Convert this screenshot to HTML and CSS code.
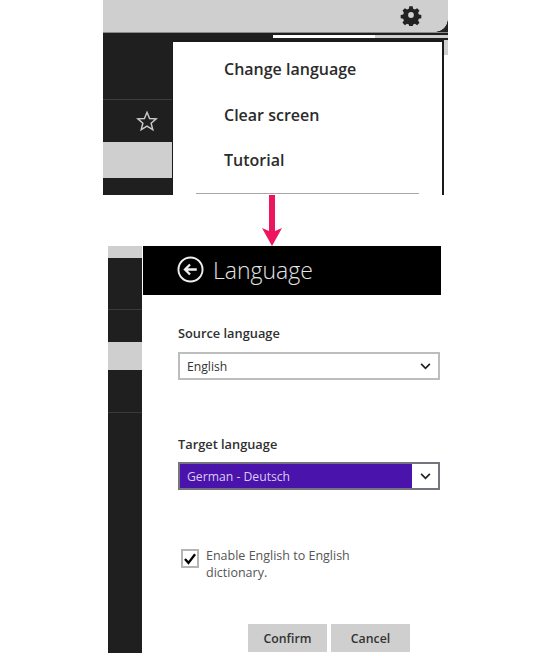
FILE: index.html
```html
<!DOCTYPE html>
<html lang="en">
<head>
<meta charset="utf-8">
<title>Language settings</title>
<link rel="stylesheet" href="styles.css">
</head>
<body>
<section class="top">
  <div class="topbar">
    <svg class="gear" viewBox="0 0 24 24" width="22" height="22"><path fill="#222" fill-rule="evenodd" d="M10 1.500h4l.6 3 2.200.9 2.600-1.700 2.900 2.900-1.700 2.600.9 2.200 3 .6v4l-3 .6-.9 2.200 1.700 2.600-2.900 2.900-2.600-1.700-2.200.9-.6 3h-4l-.6-3-2.200-.9-2.600 1.700-2.900-2.900 1.700-2.600-.9-2.200-3-.6v-4l3-.6.9-2.200-1.700-2.600 2.900-2.900 2.600 1.700 2.200-.9zM12 8.500a3.500 3.500 0 1 0 0 7 3.500 3.500 0 0 0 0-7z" transform="translate(1.200 1.200) scale(.9)"/></svg>
    <span class="corner"></span>
  </div>
  <div class="topbody">
    <div class="topstrip">
      <div class="row r1"></div>
      <div class="row r2">
        <svg class="star" viewBox="0 0 24 24" width="22" height="22"><path fill="none" stroke="#c9c9c9" stroke-width="1.600" d="M12 2.500l2.800 6.700 7.200.5-5.500 4.700 1.800 7-6.300-3.800-6.300 3.800 1.800-7L2 9.700l7.200-.5z"/></svg>
      </div>
      <div class="row r3"></div>
      <div class="row r4"></div>
    </div>
    <div class="menuwrap">
      <div class="lights"><span class="light-white"></span><span class="light-gray"></span></div>
      <div class="menurow">
        <nav class="menu">
          <a class="item">Change language</a>
          <a class="item">Clear screen</a>
          <a class="item">Tutorial</a>
          <div class="rule"></div>
        </nav>
        <div class="gutter"><span class="gutter-gray"></span></div>
      </div>
    </div>
  </div>
</section>
<div class="arrow">
  <svg viewBox="0 0 20 51" width="20" height="51"><path fill="#ee1560" d="M7 0h6v36l7-3-10 18L0 33l7 3z"/></svg>
</div>
<section class="panel">
  <div class="side">
    <div class="s s1"></div>
    <div class="s s2"></div>
    <div class="s s3"></div>
    <div class="s s4"></div>
    <div class="s s5"></div>
    <div class="s s6"></div>
  </div>
  <div class="main">
    <header class="head">
      <svg viewBox="0 0 28 28" width="27" height="27"><circle cx="14" cy="14" r="12.500" fill="none" stroke="#eee" stroke-width="2"/><path fill="none" stroke="#eee" stroke-width="2.400" d="M20.500 14H8.500M13.500 8.800L8.300 14l5.200 5.200"/></svg>
      <h1>Language</h1>
    </header>
    <div class="form">
      <label class="lab first">Source language</label>
      <div class="select">
        <span class="val">English</span>
        <span class="chev"><svg viewBox="0 0 12 8" width="11" height="7"><path fill="none" stroke="#222" stroke-width="2" d="M1 1l5 5 5-5"/></svg></span>
      </div>
      <label class="lab second">Target language</label>
      <div class="select on">
        <span class="val">German - Deutsch</span>
        <span class="chev"><svg viewBox="0 0 12 8" width="11" height="7"><path fill="none" stroke="#222" stroke-width="2" d="M1 1l5 5 5-5"/></svg></span>
      </div>
      <div class="check">
        <span class="box"><svg viewBox="0 0 18 18" width="16" height="16"><path fill="none" stroke="#000" stroke-width="3" d="M2.500 9l4.500 5 8.500-11"/></svg></span>
        <p>Enable English to English<br>dictionary.</p>
      </div>
      <div class="btns">
        <span class="btn">Confirm</span>
        <span class="btn">Cancel</span>
      </div>
    </div>
  </div>
</section>
</body>
</html>
```

FILE: styles.css
```css
* { box-sizing: border-box; }
html, body { margin: 0; padding: 0; }
body {
  width: 550px;
  height: 656px;
  overflow: hidden;
  background: #fff;
  font-family: "Open Sans", "Noto Sans", sans-serif;
  color: #262626;
}
.top { margin-left: 103px; width: 345px; height: 195px; display: flex; flex-direction: column; }
.topbar {
  height: 33px;
  background: #cfcfcf;
  display: flex;
  justify-content: flex-end;
  align-items: center;
  padding-right: 26px;
  position: relative;
  border-bottom: 1px solid #8a8a8a;
}
.gear { margin-top: -3px; }
.corner {
  position: absolute;
  right: 0;
  bottom: 0;
  width: 13px;
  height: 13px;
  background: radial-gradient(circle at 0 0, #cfcfcf 12.500px, #222 13px);
}
.topbody { flex: 1; display: flex; min-height: 0; }
.topstrip { width: 69px; display: flex; flex-direction: column; }
.row { background: #1f1f1f; }
.r1 { height: 67px; border-bottom: 1px solid #3d3d3d; }
.r2 { height: 42px; display: flex; justify-content: flex-end; align-items: center; padding-right: 14px; }
.r3 { height: 36px; background: #cfcfcf; }
.r4 { flex: 1; }
.menuwrap { flex: 1; display: flex; flex-direction: column; }
.lights { height: 7px; display: flex; padding: 2px 0 2px 101px; background: #1f1f1f; }
.light-white { width: 102px; background: #fff; }
.light-gray { flex: 1; background: #cfcfcf; }
.menurow { flex: 1; display: flex; min-height: 0; }
.menu {
  width: 272px;
  flex-shrink: 0;
  background: #fff;
  border: solid #1a1a1a;
  border-width: 2px 2px 0 1px;
  padding-left: 51px;
  padding-top: 16px;
  display: flex;
  flex-direction: column;
}
.gutter { flex: 1; }
.gutter-gray { display: block; height: 15px; background: #cfcfcf; }
.item { font-size: 16px; font-weight: 600; line-height: 22px; height: 45.500px; color: #2b2b2b; }
.rule { margin: -2px 0 0 -28px; width: 223px; height: 1px; background: #a8a8a8; }
.arrow { margin-left: 262px; height: 51px; }
.arrow svg { display: block; }
.panel { margin-left: 108px; width: 333px; height: 407px; display: flex; }
.side { width: 34px; display: flex; flex-direction: column; }
.s { background: #1f1f1f; border-bottom: 1px solid #3a3a3a; }
.s1 { height: 12px; background: #cfcfcf; border: 0; }
.s2 { height: 52px; }
.s3 { height: 32px; border: 0; }
.s4 { height: 28px; background: #cfcfcf; border: 0; }
.s5 { height: 43px; }
.s6 { flex: 1; border: 0; }
.main { flex: 1; margin-left: 1px; display: flex; flex-direction: column; }
.head { height: 49px; background: #000; display: flex; align-items: center; gap: 9px; padding: 0 0 2px 34px; }
.head h1 { margin: 0; font-size: 23px; font-weight: 300; color: #e4e4e4; }
.form { padding-left: 35px; flex: 1; }
.lab { display: block; font-size: 12.800px; font-weight: 600; line-height: 18px; color: #2f2f2f; }
.first { margin-top: 29px; }
.second { margin-top: 55px; }
.select {
  width: 262px;
  height: 28px;
  margin-top: 10px;
  border: 2px solid #bdbdbd;
  display: flex;
  align-items: center;
  font-size: 12.200px;
  color: #333;
  background: #fff;
}
.second + .select { margin-top: 9px; }
.val { flex: 1; padding-left: 7px; }
.chev { width: 26px; height: 100%; display: flex; align-items: center; justify-content: center; background: #fff; }
.on { border-color: #77747f; background: #4a13ab; color: #d9cdf2; }
.check { display: flex; margin: 57px 0 0 3px; gap: 7px; }
.box {
  width: 18px;
  height: 19px;
  border: 2px solid #b5b5b5;
  margin-top: 2px;
  display: flex;
  align-items: center;
  justify-content: center;
  flex-shrink: 0;
}
.check p { margin: 0; font-size: 12.500px; line-height: 17px; color: #555; }
.btns { display: flex; gap: 4px; margin: 43px 0 0 70px; }
.btn {
  width: 79px;
  height: 28px;
  background: #cfcfcf;
  font-size: 12.300px;
  font-weight: 600;
  display: flex;
  align-items: center;
  justify-content: center;
  color: #333;
}
```
